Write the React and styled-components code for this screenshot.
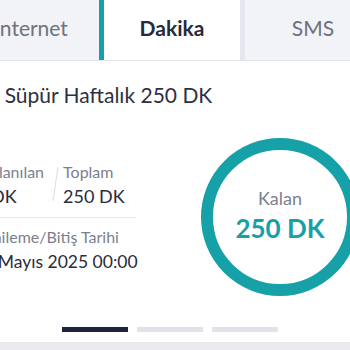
import styled, { createGlobalStyle } from 'styled-components';

const GlobalStyle = createGlobalStyle`
  html, body {
    margin: 0;
    padding: 0;
    background: #ebebef;
    overflow: hidden;
  }
  body {
    font-family: Lato, "Noto Sans", sans-serif;
    -webkit-font-smoothing: antialiased;
  }
`;

const Card = styled.div`
  width: 423px;
  margin-left: -42px;
  height: 342px;
  background: #fff;
  display: flex;
  flex-direction: column;
`;

const Tabs = styled.div`
  display: flex;
  height: 60px;
  border-bottom: 1px solid #e3e5ec;
`;

const Tab = styled.div`
  flex: 1;
  display: flex;
  align-items: center;
  justify-content: center;
  padding-bottom: 6px;
  border-left: 5px solid ${(p) => (p.$active ? '#16a0a8' : '#e4e7ef')};
  background: ${(p) => (p.$active ? '#fff' : '#f1f3f7')};
  color: ${(p) => (p.$active ? '#262a3b' : '#6f7280')};
  font-weight: ${(p) => (p.$active ? 700 : 400)};
  font-size: 21px;
`;

const Body = styled.div`
  padding: 21px 0 0 18px;
  flex: 1;
  display: flex;
  flex-direction: column;
`;

const Title = styled.h2`
  margin: 0 0 0 -7px;
  font-size: 21px;
  font-weight: 400;
  color: #2d3040;
  line-height: 26px;
  white-space: nowrap;
`;

const Main = styled.div`
  display: flex;
  align-items: center;
  margin-top: 30px;
`;

const Info = styled.div`
  width: 160px;
  flex-shrink: 0;
  display: flex;
  flex-direction: column;
`;

const Stats = styled.div`
  display: flex;
  align-items: center;
  padding-bottom: 10px;
  border-bottom: 1px solid #e6e7ec;
`;

const Stat = styled.div`
  display: flex;
  flex-direction: column;
  gap: 3px;
  white-space: nowrap;
`;

const Label = styled.span`
  font-size: 16px;
  color: #7c7f8e;
  line-height: 20px;
`;

const Value = styled.span`
  font-size: 18px;
  color: #2a2c3a;
  line-height: 22px;
`;

const Slash = styled.div`
  width: 1px;
  height: 34px;
  margin: 0 7px 0 11px;
  background: #dcdde4;
  transform: rotate(8deg);
`;

const Renewal = styled(Stat)`
  padding-top: 9px;
  gap: 4px;
`;

const DateValue = styled(Value)`
  margin-left: -3px;
  font-size: 17.5px;
`;

const Ring = styled.div`
  flex-shrink: 0;
  margin-left: 65px;
  width: 158px;
  height: 158px;
  box-sizing: border-box;
  border: 12px solid #16a0a8;
  border-radius: 50%;
  display: flex;
  flex-direction: column;
  align-items: center;
  justify-content: center;
  padding-bottom: 4px;
  gap: 4px;
`;

const RingLabel = styled.span`
  font-size: 18px;
  color: #7c7f8e;
  line-height: 22px;
`;

const RingValue = styled.span`
  font-size: 26px;
  font-weight: 700;
  color: #16a0a8;
  line-height: 30px;
`;

const Dots = styled.div`
  margin-top: auto;
  margin-bottom: 10px;
  margin-left: -18px;
  display: flex;
  justify-content: center;
  gap: 9px;
`;

const Dot = styled.span`
  width: 66px;
  height: 5px;
  background: ${(p) => (p.$active ? '#1f2340' : '#e0e2ec')};
`;

export default function App() {
  return (
    <>
      <GlobalStyle />
      <Card>
        <Tabs>
          <Tab>İnternet</Tab>
          <Tab $active>Dakika</Tab>
          <Tab>SMS</Tab>
        </Tabs>
        <Body>
          <Title>Bol Süpür Haftalık 250 DK</Title>
          <Main>
            <Info>
              <Stats>
                <Stat>
                  <Label>Kullanılan</Label>
                  <Value>0 DK</Value>
                </Stat>
                <Slash />
                <Stat>
                  <Label>Toplam</Label>
                  <Value>250 DK</Value>
                </Stat>
              </Stats>
              <Renewal>
                <Label>Yenileme/Bitiş Tarihi</Label>
                <DateValue>31 Mayıs 2025 00:00</DateValue>
              </Renewal>
            </Info>
            <Ring>
              <RingLabel>Kalan</RingLabel>
              <RingValue>250 DK</RingValue>
            </Ring>
          </Main>
          <Dots>
            <Dot $active />
            <Dot />
            <Dot />
          </Dots>
        </Body>
      </Card>
    </>
  );
}
